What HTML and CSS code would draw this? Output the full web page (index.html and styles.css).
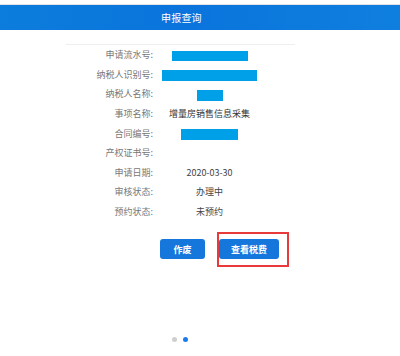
FILE: index.html
```html
<!DOCTYPE html>
<html lang="zh-CN">
<head>
    <meta charset="UTF-8">
    <meta name="viewport" content="width=device-width, initial-scale=1.0">
    <title>申报查询</title>
    <link rel="stylesheet" href="styles.css">
</head>
<body>
    <div class="topbar"></div>
    <div class="header">
        <span class="title">申报查询</span>
    </div>
    <div class="content">
        <div class="info">
            <div class="row">
                <span class="label">申请流水号:</span>
                <span class="value"><i class="mask mask-1"></i></span>
            </div>
            <div class="row">
                <span class="label">纳税人识别号:</span>
                <span class="value"><i class="mask mask-2"></i></span>
            </div>
            <div class="row">
                <span class="label">纳税人名称:</span>
                <span class="value"><i class="mask mask-3"></i></span>
            </div>
            <div class="row">
                <span class="label">事项名称:</span>
                <span class="value dark">增量房销售信息采集</span>
            </div>
            <div class="row">
                <span class="label">合同编号:</span>
                <span class="value"><i class="mask mask-5"></i></span>
            </div>
            <div class="row">
                <span class="label">产权证书号:</span>
                <span class="value"></span>
            </div>
            <div class="row">
                <span class="label">申请日期:</span>
                <span class="value">2020-03-30</span>
            </div>
            <div class="row">
                <span class="label">审核状态:</span>
                <span class="value">办理中</span>
            </div>
            <div class="row">
                <span class="label">预约状态:</span>
                <span class="value">未预约</span>
            </div>
        </div>
        <div class="actions">
            <button class="btn btn-cancel">作废</button>
            <div class="highlight">
                <button class="btn btn-tax">查看税费</button>
            </div>
        </div>
    </div>
    <div class="dots">
        <span class="dot"></span>
        <span class="dot active"></span>
    </div>
</body>
</html>
```

FILE: styles.css
```css
body {
    margin: 0;
    font-family: "Noto Sans CJK SC", "Liberation Sans", sans-serif;
    background: #fff;
    color: #333;
    width: 400px;
    height: 356px;
    overflow: hidden;
}
.topbar {
    height: 4px;
    background: #fff;
    border-bottom: 1px solid #e3e3e3;
}
.header {
    height: 25px;
    background: linear-gradient(90deg, #0c7ddc 0%, #0a74dc 45%, #0f7fdf 100%);
    display: flex;
    align-items: center;
    padding-left: 161px;
}
.title {
    color: #fff;
    font-size: 10px;
    letter-spacing: 0.2px;
}
.content {
    margin: 14px 0 0 66px;
    width: 229px;
}
.info {
    border-top: 1px solid #eeeeee;
}
.row {
    display: flex;
    align-items: center;
    height: 19.6px;
    font-size: 9px;
}
.label {
    width: 87px;
    text-align: right;
    color: #777;
}
.value {
    width: 109px;
    margin-left: 2px;
    text-align: center;
    color: #444;
}
.value.dark {
    color: #333;
}
.mask {
    display: inline-block;
    background: #00a0e9;
    vertical-align: middle;
    height: 10px;
}
.mask-1 { width: 76px; }
.mask-2 { width: 95px; height: 11px; }
.mask-3 { width: 26px; height: 11px; }
.mask-5 { width: 57px; height: 11px; }
.actions {
    display: flex;
    align-items: center;
    margin: 18px 0 0 94px;
    gap: 14px;
}
.btn {
    border: none;
    border-radius: 3px;
    background: #1576dc;
    color: #fff;
    font-family: "Noto Sans CJK SC", "Liberation Sans", sans-serif;
    font-size: 9px;
    font-weight: bold;
    height: 20px;
    padding: 0;
}
.btn-cancel {
    width: 45px;
}
.btn-tax {
    width: 60px;
}
.highlight {
    position: relative;
    display: flex;
}
.highlight::after {
    content: "";
    position: absolute;
    left: -2px;
    top: -7px;
    width: 68px;
    height: 31px;
    border: 2px solid #e8393b;
}
.dots {
    position: absolute;
    top: 337px;
    left: 172px;
    display: flex;
    gap: 6px;
}
.dot {
    width: 5px;
    height: 5px;
    border-radius: 50%;
    background: #cfcfcf;
}
.dot.active {
    background: #1a7cf2;
}
```
